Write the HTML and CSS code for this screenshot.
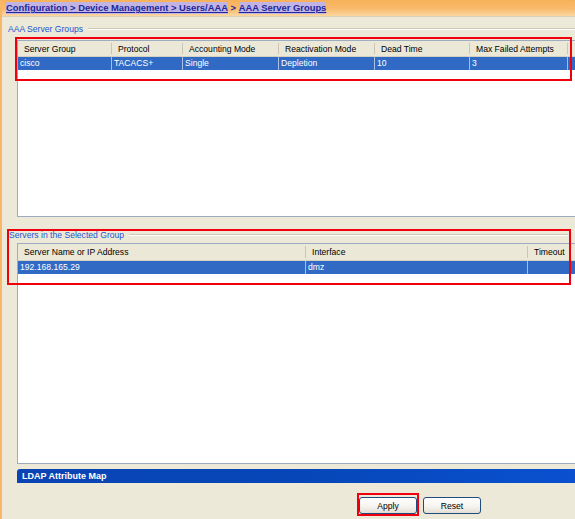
FILE: index.html
```html
<!DOCTYPE html>
<html>
<head>
<meta charset="utf-8">
<link rel="stylesheet" href="styles.css">
</head>
<body>
<div class="window">
  <div class="titlebar">
    <span class="crumb"><a>Configuration</a> &gt; <a>Device Management</a> &gt; <a>Users/AAA</a></span><span class="sep">&nbsp;&gt;&nbsp;</span><span class="crumb"><a>AAA Server Groups</a></span>
  </div>

  <section class="group g1">
    <div class="legend"><span class="legend-text">AAA Server Groups</span><span class="rule"></span></div>
    <div class="table t1">
      <div class="row head">
        <div class="cell">Server Group</div>
        <div class="cell">Protocol</div>
        <div class="cell">Accounting Mode</div>
        <div class="cell">Reactivation Mode</div>
        <div class="cell">Dead Time</div>
        <div class="cell">Max Failed Attempts</div>
        <div class="cell last"></div>
      </div>
      <div class="row sel">
        <div class="cell">cisco</div>
        <div class="cell">TACACS+</div>
        <div class="cell">Single</div>
        <div class="cell">Depletion</div>
        <div class="cell">10</div>
        <div class="cell">3</div>
        <div class="cell last"></div>
      </div>
    </div>
  </section>

  <section class="group g2">
    <div class="legend"><span class="legend-text">Servers in the Selected Group</span><span class="rule"></span></div>
    <div class="table t2">
      <div class="row head">
        <div class="cell">Server Name or IP Address</div>
        <div class="cell">Interface</div>
        <div class="cell last">Timeout</div>
      </div>
      <div class="row sel">
        <div class="cell">192.168.165.29</div>
        <div class="cell">dmz</div>
        <div class="cell last"></div>
      </div>
    </div>
  </section>

  <div class="ldap">LDAP Attribute Map</div>

  <div class="buttons">
    <button class="btn">Apply</button>
    <button class="btn">Reset</button>
  </div>
</div>

<div class="mark m1"></div>
<div class="mark m2"></div>
<div class="mark m3"></div>
</body>
</html>
```

FILE: styles.css
```css
html, body {
  margin: 0;
  padding: 0;
}
body {
  position: relative;
  width: 575px;
  height: 519px;
  overflow: hidden;
  background: #ece9d8;
  font-family: "Liberation Sans", Arial, sans-serif;
  font-size: 8.6px;
  color: #000;
}
.window {
  height: 519px;
  box-sizing: border-box;
  border-left: 2px solid #f7b668;
}

/* title bar */
.titlebar {
  height: 17px;
  box-sizing: border-box;
  background: linear-gradient(#f8b15a 0%, #f9bb6c 55%, #fcd6a2 100%);
  border-bottom: 1px solid #d9d0b8;
  display: flex;
  align-items: center;
  padding-left: 4px;
  font-weight: bold;
  font-size: 9.4px;
  color: #20279c;
  white-space: nowrap;
}
.crumb {
  background: #c2b4e2;
  text-decoration: underline;
  line-height: 12px;
}
.crumb a {
  color: #20279c;
}
.sep {
  line-height: 12px;
}

/* group boxes */
.legend {
  display: flex;
  align-items: center;
  height: 10px;
  line-height: 10px;
  color: #1c55d4;
}
.legend-text {
  white-space: nowrap;
}
.rule {
  flex: 1;
  height: 0;
  border-top: 1px solid #cbc8b6;
  border-bottom: 1px solid #ffffff;
  margin-left: 5px;
}
.g1 .legend {
  margin-top: 7px;
  padding-left: 6px;
}
.g2 .legend {
  margin-top: 13px;
  padding-left: 7px;
  margin-right: 7px;
}

/* tables */
.table {
  margin-left: 15px;
  background: #fff;
  border: 1px solid #9eacc2;
  border-right: none;
  box-sizing: border-box;
  overflow: hidden;
}
.t1 {
  margin-top: 6px;
  height: 177px;
}
.t2 {
  margin-top: 3px;
  height: 221px;
}
.row {
  display: grid;
}
.t1 .row {
  grid-template-columns: 94px 71px 96px 96px 95px 98px 1fr;
}
.t2 .row {
  grid-template-columns: 288px 222px 1fr;
}
.cell {
  box-sizing: border-box;
  white-space: nowrap;
  overflow: hidden;
}
.head {
  background: #ebe8d7;
  border-bottom: 1px solid #d5d1c0;
}
.t1 .head { height: 15px; }
.t2 .head { height: 16px; }
.head .cell {
  padding-left: 6px;
  display: flex;
  align-items: center;
  position: relative;
}
.head .cell::after {
  content: "";
  position: absolute;
  right: 0;
  top: 2px;
  bottom: 2px;
  width: 1px;
  background: #c9c6b4;
  box-shadow: 1px 0 0 #fff;
}
.head .cell.last::after {
  display: none;
}
.sel {
  background: #316ac5;
  color: #fff;
  height: 13px;
}
.sel .cell {
  padding-left: 2px;
  line-height: 13px;
  border-right: 1px solid #a9bee4;
}
.sel .cell.last {
  border-right: none;
}

/* LDAP bar */
.ldap {
  margin-top: 5px;
  margin-left: 15px;
  height: 14px;
  line-height: 14px;
  padding-left: 5px;
  background: linear-gradient(to right, #0a44b4 0%, #0646b8 50%, #0a50cf 100%);
  border-top-left-radius: 3px;
  color: #fff;
  font-weight: bold;
  font-size: 9px;
}

/* buttons */
.buttons {
  display: flex;
  gap: 6px;
  padding-left: 357px;
  margin-top: 14px;
}
.btn {
  width: 58px;
  height: 17px;
  padding: 0;
  border: 1px solid #1f4b7e;
  border-radius: 3px;
  background: linear-gradient(#ffffff 0%, #f4f3ee 60%, #e2ded3 100%);
  font-family: "Liberation Sans", Arial, sans-serif;
  font-size: 8.6px;
  color: #000;
}

/* red annotation rectangles */
.mark {
  position: absolute;
  border: 2px solid #f0000c;
  box-sizing: border-box;
}
.m1 { left: 15px; top: 37px; width: 557px; height: 44px; }
.m2 { left: 7px; top: 229px; width: 564px; height: 56px; }
.m3 { left: 357px; top: 493px; width: 62px; height: 23px; }
```
